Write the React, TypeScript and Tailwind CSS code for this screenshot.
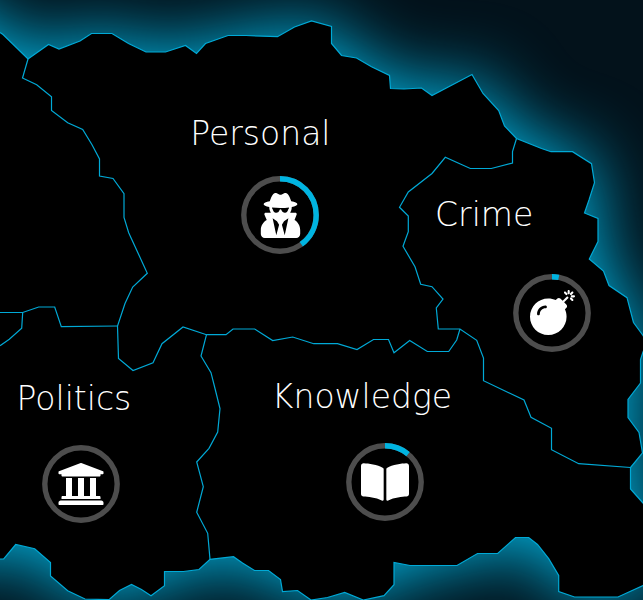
import React from "react";
import { FaBomb, FaBookOpen, FaUniversity, FaUserSecret } from "react-icons/fa";

const COAST =
  "-150,-30 -30,2 0,32.5 3,34.5 28,59 48.5,44.5 59,49 80,41 91.5,33.5 112,33.5 128.5,43.5 146,52 165.5,52 185.5,45.5 196.5,53.5 205.5,43.5 228,35.5 246,35.5 277.5,36.7 294.5,27 311.5,21 331.5,26.5 331.5,43.5 341.5,55.5 356.5,58 371.5,66.7 389.5,75.5 390.5,88.5 404,89 421.5,88 432,95.5 472,74.5 483,93.5 498.7,110.5 504.5,126 516.5,138.5 541.5,148.5 551,151.7 572.5,151.7 591.5,163.7 594.5,182.7 589,200 584.5,213 598,218.5 598,241.5 589.3,259 603.5,271 609,285.5 627,297.7 633.5,322.5 643,335.5 647,342 643,352 640.5,359.5 640.5,383 628,399.5 628,417.5 639,432.5 642.5,453 630.5,467.5 630.5,489 643,503 655,520 655,580 643,585.5 618,597 574.5,597 558.7,591.5 558.7,575.5 548.7,558.7 537.5,544.5 528.7,537.5 515.5,537.5 497.7,553.5 477.5,553.5 457,565.5 410,565.5 394,562.5 394,584.7 384,595.7 363.3,600 344.7,592.5 327.5,597.5 311,600 297.5,590.5 282.5,591.5 280.5,579.5 268.5,570.5 254.5,570.5 242.5,563 233.5,556.7 210,559.3 199,569.5 183.5,571.5 164.5,571.5 164.5,585.7 151,595.7 141.5,589.5 131.5,584.5 119.5,590.5 109,599.7 85,599 67.7,590.7 50.5,576 50.5,562.5 34.7,548.7 15.7,544.5 3.7,559 -150,559";

const BORDERS = [
  "28,59 22.5,78 36.7,84.7 51.5,96.7 51.5,110.5 67.7,122.7 82.7,129.5 92,144.7 99.5,159 99.5,176 113,178.5 124,193.7 124,217.5 128.7,232.7 147.3,273.3 132.7,287 125,303.5 117.5,326 118.5,358.5 133,370.5 153,362.7 162,343.7 183,327 206.5,334.7 226,334.7 233,329 254.7,329 272.7,340.5 292.7,337 313.7,343.7 337.5,343.7 357,349.5 373.5,339.5 388.5,339.5 394,352.7 409.7,340.5 427.3,351.5 448.7,351.5 456.7,340 460,329",
  "0,312.5 22.7,312.5 38.7,307 54.7,307 61.3,326.7 117.5,326",
  "22.7,312.5 21.7,328.3 9.3,339.3 0,345.7",
  "206.5,334.7 201,356 211,372.7 215,388.5 220,408.5 217.7,432 209,448.3 196.7,462 203.3,486.7 196.7,512.3 207.7,533.3 210,559.3",
  "516.5,138.5 512.5,151.7 512.5,163 491.3,168.5 470.3,168.5 445.3,157.3 432,173.5 408.3,192 399.5,207.3 408.3,216 408.3,231.7 403,246.3 415,266.7 420.7,284.3 432,286.7 443,299 436.3,308 438.3,329 460,329 476.7,340.3 483.5,358 483.5,380.7 524,400 531,417.3 551.5,428.3 551.5,449.7 578.7,463.7 630.5,467.5",
];

function Coastline() {
  return (
    <svg viewBox="0 0 643 600" className="block h-full w-full" aria-hidden="true">
      <defs>
        <filter id="glow" filterUnits="userSpaceOnUse" x="-200" y="-200" width="1050" height="1000" colorInterpolationFilters="sRGB">
          <feGaussianBlur stdDeviation="35" />
        </filter>
      </defs>
      <polygon points={COAST} fill="#00b4e1" stroke="#00b4e1" strokeWidth="2" filter="url(#glow)" />
      <polygon points={COAST} fill="#000" stroke="#00a9d6" strokeWidth="1.2" />
      <g fill="none" stroke="#00a9d6" strokeWidth="1.2">
        {BORDERS.map((points) => (
          <polyline key={points} points={points} />
        ))}
      </g>
    </svg>
  );
}

function Gauge({ percent, children }: { percent: number; children: React.ReactNode }) {
  return (
    <span className="grid size-20 place-items-center text-white">
      <svg viewBox="0 0 80 80" className="col-start-1 row-start-1 size-20 -rotate-90" aria-hidden="true">
        <circle cx="40" cy="40" r="36.2" fill="none" stroke="#4d4d4d" strokeWidth="5.4" />
        {percent > 0 && (
          <circle cx="40" cy="40" r="36.2" fill="none" stroke="#00b4e1" strokeWidth="5.4" pathLength="100" strokeDasharray={`${percent} 100`} />
        )}
      </svg>
      <span className="col-start-1 row-start-1">{children}</span>
    </span>
  );
}

const AREAS = [
  { name: "Personal", percent: 40, label: "left-[40.5%] top-[22.3%]", gauge: "left-[43.6%] top-[35.9%]", icon: <FaUserSecret size={45} /> },
  { name: "Crime", percent: 3, label: "left-[75.3%] top-[35.9%]", gauge: "left-[85.9%] top-[52.1%]", icon: <FaBomb size={45} /> },
  { name: "Politics", percent: 0, label: "left-[11.5%] top-[66.5%]", gauge: "left-[12.6%] top-[80.7%]", icon: <FaUniversity size={48} /> },
  { name: "Knowledge", percent: 11, label: "left-[56.3%] top-[66.2%]", gauge: "left-[59.9%] top-[80.3%]", icon: <FaBookOpen size={48} /> },
];

export default function App() {
  return (
    <main className="min-h-screen overflow-hidden bg-[#03121b]">
      <div className="relative aspect-[643/600] w-full">
        <Coastline />
        {AREAS.map((area) => (
          <React.Fragment key={area.name}>
            <h2
              className={`absolute -translate-x-1/2 -translate-y-1/2 font-['DejaVu_Sans',sans-serif] text-[33px] leading-10 font-extralight whitespace-nowrap text-white ${area.label}`}
            >
              {area.name}
            </h2>
            <button type="button" aria-label={area.name} className={`absolute -translate-x-1/2 -translate-y-1/2 rounded-full ${area.gauge}`}>
              <Gauge percent={area.percent}>{area.icon}</Gauge>
            </button>
          </React.Fragment>
        ))}
      </div>
    </main>
  );
}
